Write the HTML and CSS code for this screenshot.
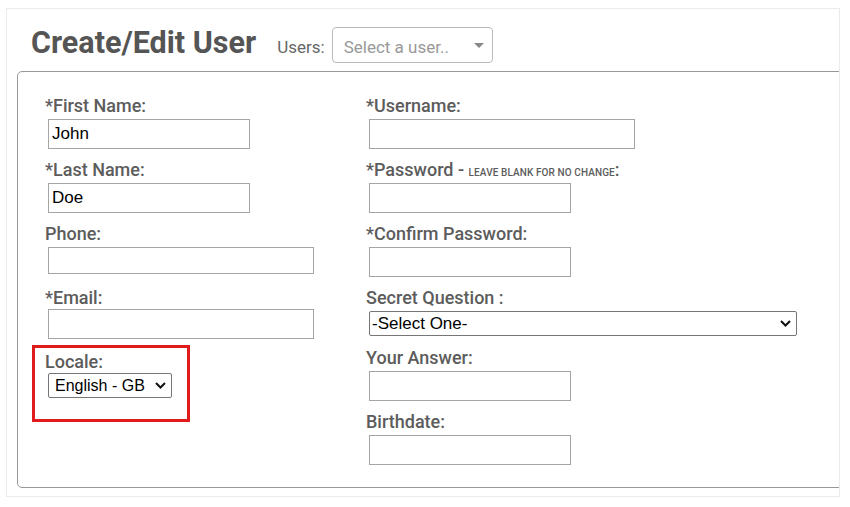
FILE: index.html
```html
<!DOCTYPE html>
<html lang="en">
<head>
    <meta charset="UTF-8">
    <meta name="viewport" content="width=device-width, initial-scale=1.0">
    <title>Create/Edit User</title>
    <link rel="stylesheet" href="styles.css">
</head>
<body>
    <div class="panel">
        <div class="header">
            <h1 class="title">Create/Edit User</h1>
            <span class="users-label">Users:</span>
            <div class="user-picker">
                <span class="placeholder">Select a user..</span>
                <span class="caret"></span>
            </div>
        </div>

        <!-- User details form -->
        <fieldset class="user-form">
            <div class="form-grid">
                <div class="col">
                    <div class="field">
                        <label for="firstName">*First Name:</label>
                        <input type="text" id="firstName" class="w-short" value="John">
                    </div>
                    <div class="field">
                        <label for="lastName">*Last Name:</label>
                        <input type="text" id="lastName" class="w-short" value="Doe">
                    </div>
                    <div class="field field-phone">
                        <label for="phone">Phone:</label>
                        <input type="text" id="phone" class="w-long">
                    </div>
                    <div class="field field-email">
                        <label for="email">*Email:</label>
                        <input type="text" id="email" class="w-long">
                    </div>
                    <div class="field highlight">
                        <label for="locale">Locale:</label>
                        <div class="select-wrap locale-wrap">
                            <select id="locale">
                                <option>English - GB</option>
                                <option>English - US</option>
                            </select>
                            <svg class="chevron" width="11" height="7" viewBox="0 0 11 7"><path d="M1 1 L5.5 5.5 L10 1" fill="none" stroke="#111" stroke-width="2"/></svg>
                        </div>
                    </div>
                </div>

                <div class="col">
                    <div class="field">
                        <label for="username">*Username:</label>
                        <input type="text" id="username" class="w-long">
                    </div>
                    <div class="field">
                        <label for="password">*Password - <span class="hint">Leave blank for no change</span>:</label>
                        <input type="password" id="password" class="w-short">
                    </div>
                    <div class="field">
                        <label for="confirm">*Confirm Password:</label>
                        <input type="password" id="confirm" class="w-short">
                    </div>
                    <div class="field field-question">
                        <label for="question">Secret Question :</label>
                        <div class="select-wrap question-wrap">
                            <select id="question">
                                <option>-Select One-</option>
                            </select>
                            <svg class="chevron" width="11" height="7" viewBox="0 0 11 7"><path d="M1 1 L5.5 5.5 L10 1" fill="none" stroke="#111" stroke-width="2"/></svg>
                        </div>
                    </div>
                    <div class="field">
                        <label for="answer">Your Answer:</label>
                        <input type="text" id="answer" class="w-short">
                    </div>
                    <div class="field">
                        <label for="birthdate">Birthdate:</label>
                        <input type="text" id="birthdate" class="w-short">
                    </div>
                </div>
            </div>
        </fieldset>
    </div>
</body>
</html>
```
FILE: styles.css
```css
body {
    margin: 0;
    background-color: #fff;
    font-family: Roboto, sans-serif;
}

.panel {
    box-sizing: border-box;
    width: 834px;
    margin: 8px 0 0 6px;
    padding: 0 0 8px 10px;
    border: 1px solid #ebebeb;
    overflow: hidden;
}

.header {
    box-sizing: border-box;
    height: 62px;
    display: flex;
    align-items: baseline;
    padding: 16px 0 0 14px;
}

.title {
    margin: 0;
    font-size: 30.5px;
    line-height: 36px;
    font-weight: 700;
    color: #555;
}

.users-label {
    margin: 0 7px 0 21px;
    font-size: 17px;
    color: #666;
}

.user-picker {
    box-sizing: border-box;
    width: 161px;
    height: 36px;
    display: flex;
    align-items: flex-start;
    justify-content: space-between;
    padding: 9px 8px 5px 11px;
    border: 1px solid #bbb;
    border-radius: 4px;
    font-size: 17px;
    line-height: 20px;
}

.placeholder {
    color: #999;
}

.caret {
    margin-top: 6px;
    border-left: 5px solid transparent;
    border-right: 5px solid transparent;
    border-top: 5px solid #888;
}

.user-form {
    box-sizing: border-box;
    width: 840px;
    margin: 0;
    padding: 24px 0 22px 27px;
    border: 1px solid #999;
    border-radius: 5px;
}

.form-grid {
    display: grid;
    grid-template-columns: 321px 1fr;
}

.field {
    margin-bottom: 11px;
}

.col .field:last-child {
    margin-bottom: 0;
}

.field label {
    display: block;
    font-size: 18px;
    line-height: 20px;
    font-weight: 500;
    color: #5c5c5c;
}

.hint {
    font-size: 10px;
    line-height: 1;
    text-transform: uppercase;
    letter-spacing: 0.1px;
}

.field input {
    display: block;
    box-sizing: border-box;
    height: 30px;
    margin: 3px 0 0 3px;
    padding: 0 3px;
    border: 1px solid #a5a5a5;
    font-family: "Liberation Sans", Arial, sans-serif;
    font-size: 17px;
    color: #000;
}

.w-short {
    width: 202px;
}

.w-long {
    width: 266px;
}

.field-phone input {
    height: 27px;
}

.field-phone {
    margin-bottom: 14px;
}

.field-email input {
    margin-top: 1px;
}

.field-email {
    margin-bottom: 6px;
}

/* selects with a chevron drawn on top */
.select-wrap {
    position: relative;
    margin: 1px 0 0 3px;
}

.select-wrap select {
    display: block;
    box-sizing: border-box;
    width: 100%;
    height: 25px;
    margin: 0;
    padding: 0 20px 0 5px;
    border: 1px solid #767676;
    border-radius: 2px;
    appearance: none;
    -webkit-appearance: none;
    background-color: #fff;
    font-family: "Liberation Sans", Arial, sans-serif;
    font-size: 17px;
    color: #000;
}

.chevron {
    position: absolute;
    top: 9px;
    right: 6px;
    pointer-events: none;
}

.highlight {
    box-sizing: border-box;
    width: 158px;
    margin: 0 0 0 -13px;
    padding: 4px 0 21px 10px;
    border: 3px solid #e01b1b;
}

.locale-wrap {
    width: 124px;
}

.locale-wrap select {
    padding-left: 6px;
    font-size: 16px;
}

.question-wrap {
    width: 428px;
    margin-top: 3px;
}

.question-wrap select {
    padding-left: 2px;
}

.field-question {
    margin-bottom: 12px;
}
```
